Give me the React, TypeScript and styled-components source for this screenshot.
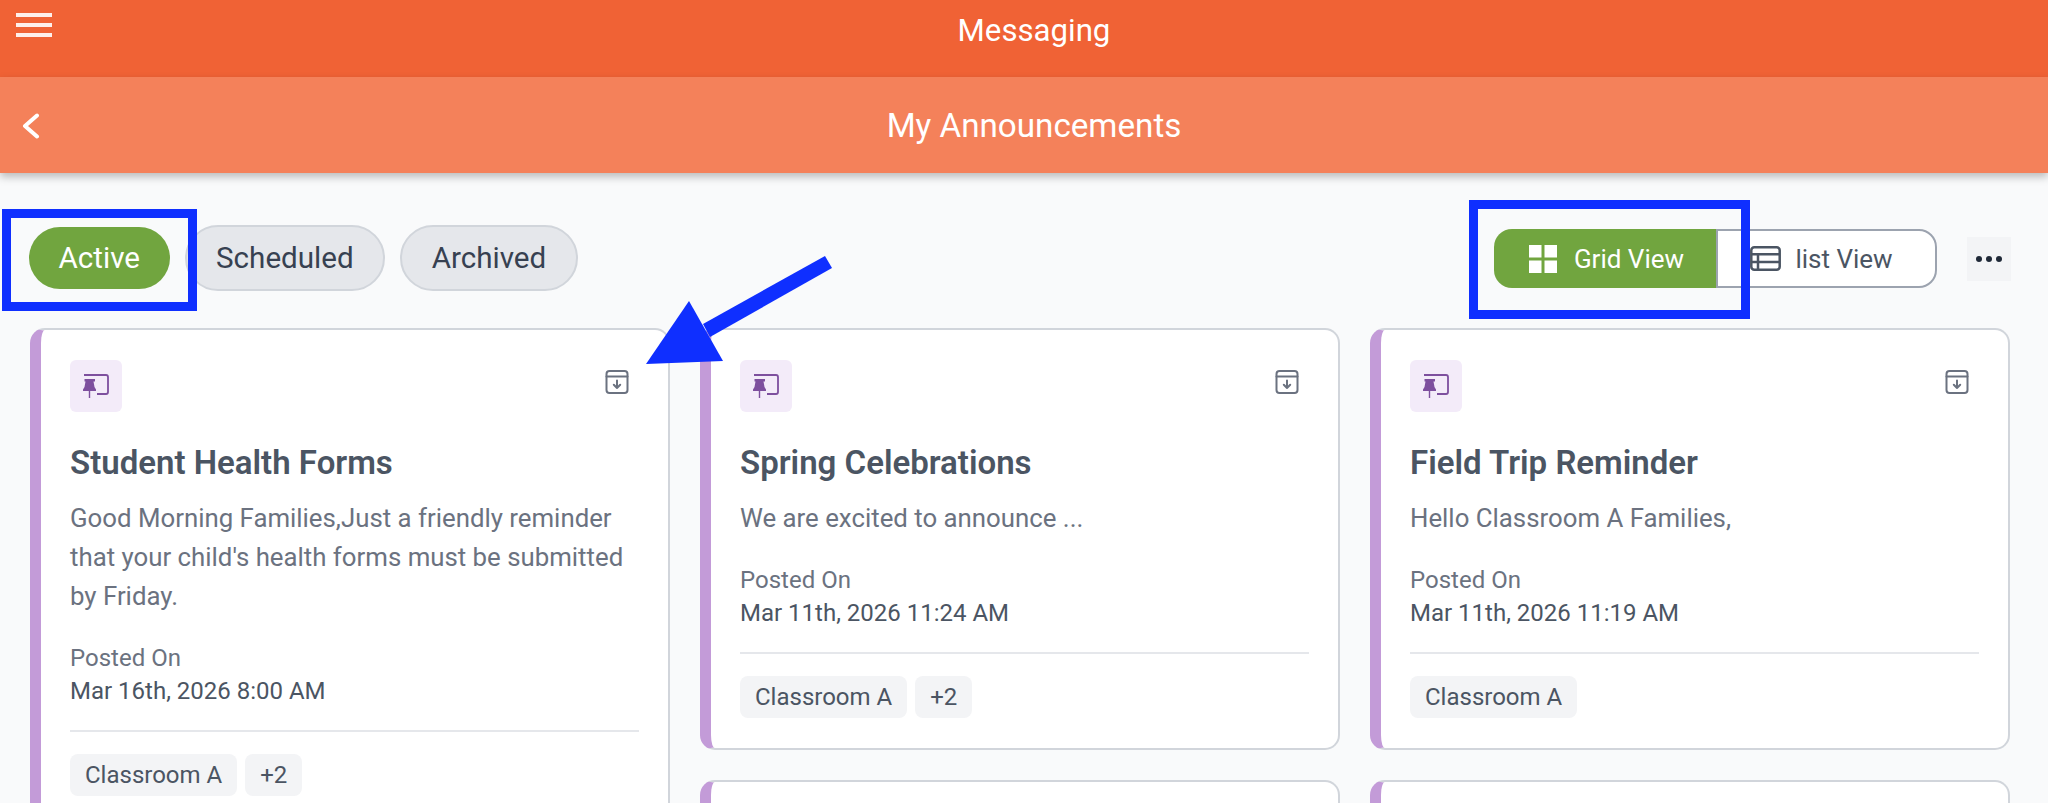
import styled, { createGlobalStyle } from "styled-components";

const GlobalStyle = createGlobalStyle`
  html, body {
    margin: 0;
    background: #f9fafb;
    font-family: Roboto, "Liberation Sans", sans-serif;
  }
  * { box-sizing: border-box; }
`;

type Announcement = {
  title: string;
  body: string;
  posted: string;
  extra?: number;
};

const columns: { card: Announcement; hasNext: boolean }[] = [
  {
    card: {
      title: "Student Health Forms",
      body: "Good Morning Families,Just a friendly reminder that your child's health forms must be submitted by Friday.",
      posted: "Mar 16th, 2026 8:00 AM",
      extra: 2,
    },
    hasNext: false,
  },
  {
    card: {
      title: "Spring Celebrations",
      body: "We are excited to announce ...",
      posted: "Mar 11th, 2026 11:24 AM",
      extra: 2,
    },
    hasNext: true,
  },
  {
    card: {
      title: "Field Trip Reminder",
      body: "Hello Classroom A Families,",
      posted: "Mar 11th, 2026 11:19 AM",
    },
    hasNext: true,
  },
];

const PinIcon = () => (
  <svg width="26" height="24" viewBox="0 0 26 24" fill="none">
    <path d="M1 1h22a2 2 0 0 1 2 2v15a2 2 0 0 1-2 2h-9" stroke="#7d4f9e" strokeWidth="1.800" />
    <path d="M1.500 5H12v2.500h-1.500l1 5.500 1.500 2.500V17H7.200v7H5.800v-7H0v-1.500L1.500 13l1-5.500h-1z" fill="#7d4f9e" />
  </svg>
);

const ArchiveIcon = () => (
  <svg width="24" height="24" viewBox="0 0 24 24" fill="none" stroke="#6b7280" strokeWidth="2" strokeLinecap="round" strokeLinejoin="round">
    <rect x="1.500" y="1" width="21" height="22" rx="3" />
    <path d="M1.500 6.500h21M12 10.500v7.500M8.800 14.800 12 18l3.200-3.200" />
  </svg>
);

const GridIcon = () => (
  <svg width="28" height="28" viewBox="0 0 28 28" fill="#fff">
    <rect width="12.500" height="12.500" />
    <rect x="15.500" width="12.500" height="12.500" />
    <rect y="15.500" width="12.500" height="12.500" />
    <rect x="15.500" y="15.500" width="12.500" height="12.500" />
  </svg>
);

const TableIcon = () => (
  <svg width="31" height="25" viewBox="0 0 31 25" fill="none" stroke="#4b5563" strokeWidth="2.500">
    <rect x="1.300" y="1.300" width="28.400" height="22.400" rx="3" />
    <path d="M1.300 8.200h28.400M1.300 16h28.400M8 8.200v15.500" />
  </svg>
);

const App = () => (
  <Page>
    <GlobalStyle />
    <TopBar>
      <MenuButton>
        <span />
        <span />
        <span />
      </MenuButton>
      Messaging
    </TopBar>
    <SubBar>
      <BackButton>
        <svg width="18" height="26" viewBox="0 0 18 26" fill="none" stroke="#fff" strokeWidth="4" strokeLinecap="round" strokeLinejoin="round">
          <path d="M15 2.500 3 13l12 10.500" />
        </svg>
      </BackButton>
      My Announcements
    </SubBar>
    <Toolbar>
      <Tabs>
        <Tab $active>Active</Tab>
        <Tab>Scheduled</Tab>
        <Tab>Archived</Tab>
      </Tabs>
      <ViewTools>
        <Segment>
          <GridButton>
            <GridIcon />
            Grid View
          </GridButton>
          <ListButton>
            <TableIcon />
            list View
          </ListButton>
        </Segment>
        <MoreButton>
          <i />
          <i />
          <i />
        </MoreButton>
      </ViewTools>
    </Toolbar>
    <CardGrid>
      {columns.map(({ card, hasNext }) => (
        <Column key={card.title}>
          <Card>
            <CardHead>
              <PinBadge>
                <PinIcon />
              </PinBadge>
              <ArchiveIcon />
            </CardHead>
            <CardTitle>{card.title}</CardTitle>
            <CardBody>{card.body}</CardBody>
            <PostedLabel>Posted On</PostedLabel>
            <PostedDate>{card.posted}</PostedDate>
            <Divider />
            <Chips>
              <Chip>Classroom A</Chip>
              {card.extra ? <Chip>+{card.extra}</Chip> : null}
            </Chips>
          </Card>
          {hasNext && <NextCard />}
        </Column>
      ))}
    </CardGrid>
    <ActiveMark />
    <ViewMark />
    <Arrow width="220" height="140" viewBox="0 0 220 140">
      <path d="M195 16 202 28 80 97 73 84z" fill="#0f2fff" />
      <path d="M16 124 59 61 93 121z" fill="#0f2fff" />
    </Arrow>
  </Page>
);

export default App;

const Page = styled.div`
  position: relative;
  height: 803px;
  overflow: hidden;
`;

const TopBar = styled.header`
  position: relative;
  height: 77px;
  display: flex;
  align-items: center;
  justify-content: center;
  padding: 0 0 17px 20px;
  background: #f06235;
  color: #fff;
  font-size: 31.200px;
`;

const MenuButton = styled.div`
  position: absolute;
  left: 16px;
  top: 13px;
  width: 36px;
  display: flex;
  flex-direction: column;
  gap: 6px;
  span {
    height: 4px;
    background: #fff;
    opacity: 0.9;
  }
`;

const SubBar = styled.div`
  position: relative;
  height: 96px;
  display: flex;
  align-items: center;
  justify-content: center;
  padding-left: 20px;
  background: #f4815a;
  color: #fff;
  font-size: 33.200px;
  box-shadow: 0 4px 8px rgba(0, 0, 0, 0.25);
`;

const BackButton = styled.div`
  position: absolute;
  left: 22px;
  top: 36px;
  display: flex;
`;

const Toolbar = styled.div`
  height: 155px;
  display: flex;
  align-items: flex-start;
  justify-content: space-between;
  padding: 52px 37px 0 29px;
`;

const Tabs = styled.div`
  display: flex;
  align-items: center;
  gap: 15px;
`;

const Tab = styled.div<{ $active?: boolean }>`
  height: ${({ $active }) => ($active ? "62px" : "66px")};
  padding: 0 29.500px;
  display: flex;
  align-items: center;
  border-radius: 33px;
  border: ${({ $active }) => ($active ? "none" : "2px solid #d1d5db")};
  background: ${({ $active }) => ($active ? "#71a53f" : "#e5e7eb")};
  color: ${({ $active }) => ($active ? "#fff" : "#374151")};
  font-size: 29.600px;
`;

const ViewTools = styled.div`
  display: flex;
  align-items: center;
  gap: 30px;
  margin-top: 4px;
`;

const Segment = styled.div`
  display: flex;
  height: 59px;
  width: 443px;
`;

const GridButton = styled.div`
  width: 222px;
  padding-left: 3px;
  display: flex;
  align-items: center;
  justify-content: center;
  gap: 17px;
  background: #71a53f;
  border-radius: 18px 0 0 18px;
  color: #fff;
  font-size: 26px;
`;

const ListButton = styled.div`
  flex: 1;
  padding-right: 10px;
  display: flex;
  align-items: center;
  justify-content: center;
  gap: 14px;
  background: #fff;
  border: 2px solid #9ca3af;
  border-radius: 0 18px 18px 0;
  color: #4b5563;
  font-size: 26px;
`;

const MoreButton = styled.div`
  width: 44px;
  height: 44px;
  display: flex;
  align-items: center;
  justify-content: center;
  gap: 4px;
  background: #f3f4f6;
  i {
    width: 6px;
    height: 6px;
    border-radius: 50%;
    background: #1f2937;
  }
`;

const CardGrid = styled.main`
  display: grid;
  grid-template-columns: repeat(3, 640px);
  gap: 30px;
  padding-left: 30px;
`;

const Column = styled.div`
  display: flex;
  flex-direction: column;
  gap: 30px;
`;

const Card = styled.article`
  background: #fff;
  border: 2px solid #d1d5db;
  border-left: 11px solid #c39bd8;
  border-radius: 15px;
  padding: 30px 29px;
`;

const NextCard = styled(Card)`
  height: 120px;
`;

const CardHead = styled.div`
  display: flex;
  align-items: flex-start;
  justify-content: space-between;
  padding-right: 10px;
  > svg { margin-top: 10px; }
`;

const PinBadge = styled.div`
  width: 52px;
  height: 52px;
  display: flex;
  align-items: center;
  justify-content: center;
  background: #f3ebf9;
  border-radius: 6px;
`;

const CardTitle = styled.h3`
  margin: 31px 0 0;
  font-size: 33px;
  line-height: 40px;
  font-weight: 600;
  color: #4b5563;
`;

const CardBody = styled.p`
  margin: 16px 0 0;
  font-size: 25.800px;
  line-height: 39px;
  color: #6b7280;
`;

const PostedLabel = styled.div`
  margin-top: 25px;
  font-size: 24px;
  line-height: 34px;
  color: #6b7280;
`;

const PostedDate = styled.div`
  font-size: 24px;
  line-height: 33px;
  color: #4b5563;
`;

const Divider = styled.hr`
  margin: 22px 0 0;
  border: none;
  border-top: 2px solid #e5e7eb;
`;

const Chips = styled.div`
  display: flex;
  gap: 8px;
  margin-top: 22px;
`;

const Chip = styled.span`
  height: 42px;
  padding: 0 15px;
  display: flex;
  align-items: center;
  background: #f3f4f6;
  border-radius: 8px;
  font-size: 24px;
  color: #4b5563;
`;

const ActiveMark = styled.div`
  position: absolute;
  left: 2px;
  top: 209px;
  width: 195px;
  height: 102px;
  border: 9px solid #0f2fff;
`;

const ViewMark = styled.div`
  position: absolute;
  left: 1469px;
  top: 200px;
  width: 281px;
  height: 119px;
  border: 9px solid #0f2fff;
`;

const Arrow = styled.svg`
  position: absolute;
  left: 630px;
  top: 240px;
`;
